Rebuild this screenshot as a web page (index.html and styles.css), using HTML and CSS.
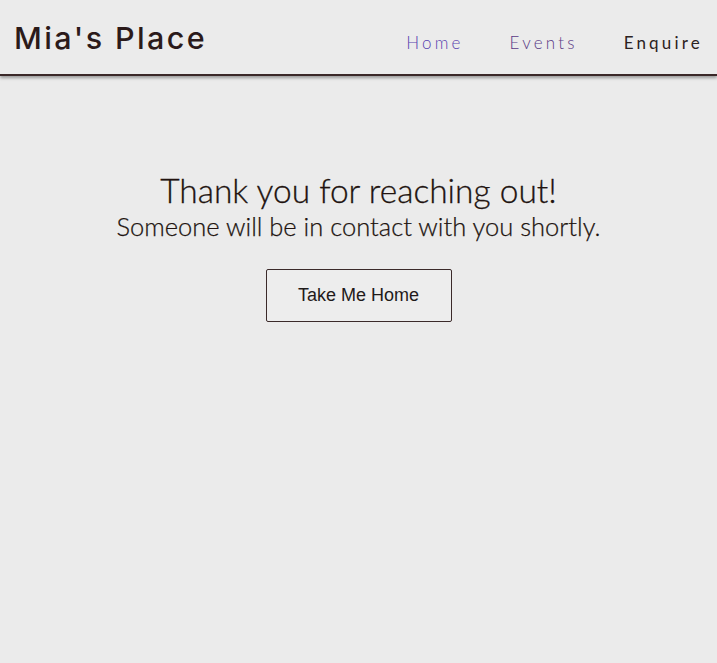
FILE: index.html
```html
<!DOCTYPE html>
<html lang="en">
<head>
<meta charset="utf-8">
<title>Mia's Place</title>
<link rel="stylesheet" href="styles.css">
</head>
<body>
<header class="site-header">
  <a class="logo" href="#">Mia's Place</a>
  <nav class="nav">
    <a class="nav-link home" href="#">Home</a>
    <a class="nav-link events" href="#">Events</a>
    <a class="nav-link enquire" href="#">Enquire</a>
  </nav>
</header>
<main class="thanks">
  <h1 class="title">Thank you for reaching out!</h1>
  <p class="subtitle">Someone will be in contact with you shortly.</p>
  <a class="btn" href="#">Take Me Home</a>
</main>
</body>
</html>
```
FILE: styles.css
```css
* { box-sizing: border-box; }
html, body { margin: 0; padding: 0; }
body {
  background: #ebebeb;
  font-family: Lato, "Liberation Sans", sans-serif;
  color: #2b1a1a;
  min-height: 663px;
}
.site-header {
  height: 76px;
  display: flex;
  align-items: center;
  justify-content: space-between;
  padding: 0 14px 0 14px;
  border-bottom: 2px solid #3a2828;
  box-shadow: 0 2px 3px rgba(0,0,0,0.35);
  background: #ebebeb;
}
.logo {
  font-family: Inter, "Open Sans", sans-serif;
  font-weight: 500;
  font-size: 30.5px;
  letter-spacing: 2.4px;
  color: #2b1a1a;
  text-decoration: none;
  margin-top: 0;
}
.nav {
  display: flex;
  gap: 46px;
  margin-top: 10px;
}
.nav-link {
  font-family: Lato, sans-serif;
  font-weight: 300;
  font-size: 17px;
  letter-spacing: 3.2px;
  text-decoration: none;
}
.home { color: #5a44b0; }
.events { color: #5a3a86; }
.enquire { color: #2b2222; font-weight: 400; }
.thanks {
  display: flex;
  flex-direction: column;
  align-items: center;
  padding-top: 93px;
}
.title {
  margin: 0;
  font-weight: 300;
  font-size: 33.5px;
  line-height: 42px;
  color: #21130f;
  -webkit-text-stroke: 0.3px #21130f;
}
.subtitle {
  margin: -2px 0 0;
  font-weight: 300;
  font-size: 25.5px;
  line-height: 34px;
  color: #21130f;
  -webkit-text-stroke: 0.25px #21130f;
}
.btn {
  margin-top: 26px;
  width: 186px;
  height: 53px;
  display: flex;
  align-items: center;
  justify-content: center;
  border: 1px solid #3b2a2a;
  border-radius: 2px;
  background: #ededed;
  font-family: "Liberation Sans", Arial, sans-serif;
  font-size: 18px;
  color: #1f1a1a;
  text-decoration: none;
}
```
